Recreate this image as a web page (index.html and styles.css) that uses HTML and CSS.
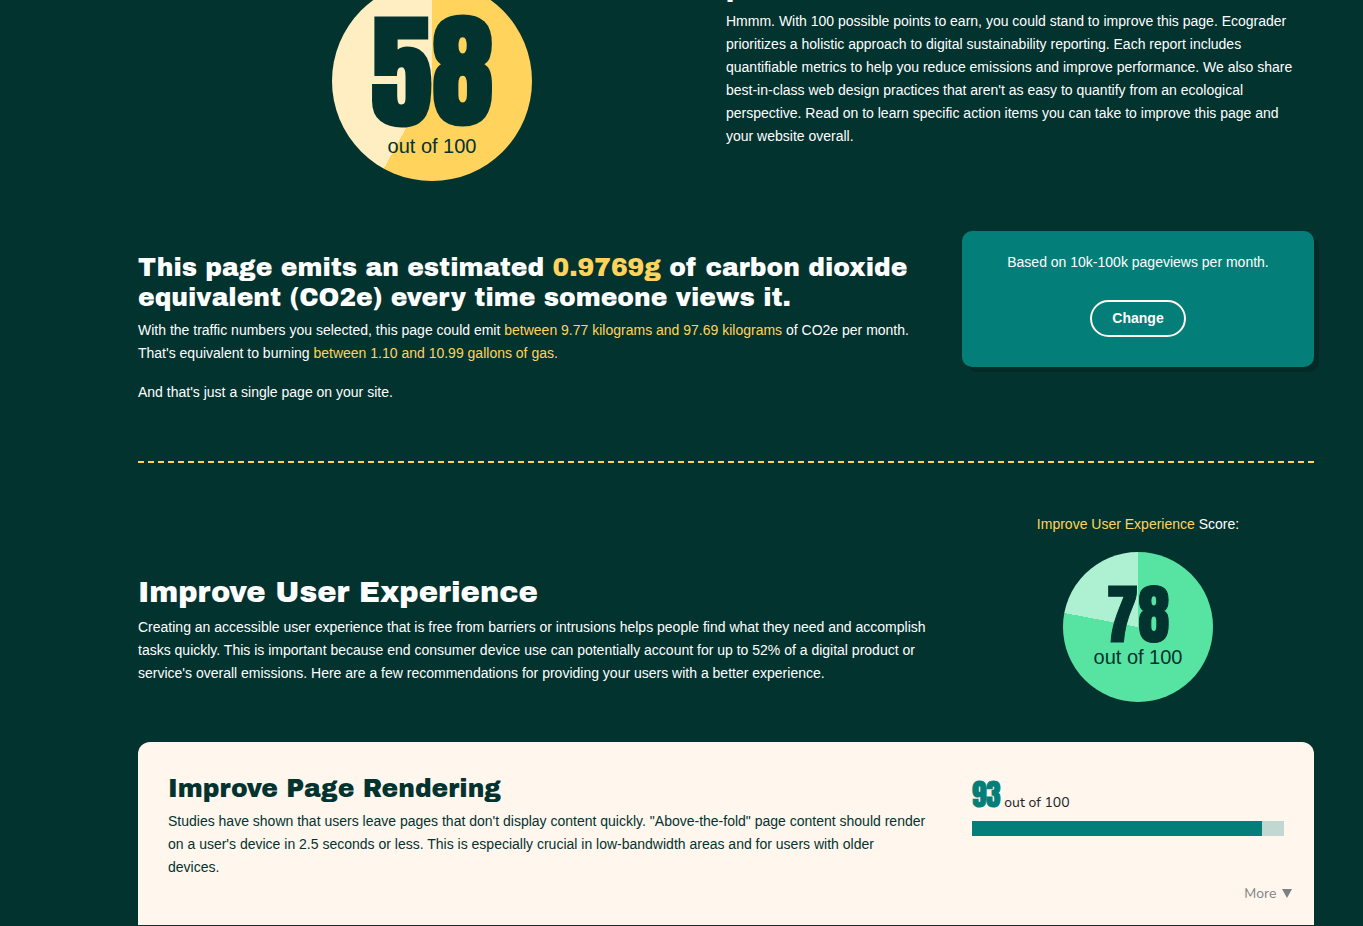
FILE: index.html
```html
<!DOCTYPE html>
<html lang="en">
<head>
<meta charset="utf-8">
<meta name="viewport" content="width=device-width, initial-scale=1">
<title>Ecograder Report</title>
<link rel="stylesheet" href="styles.css">
</head>
<body>
<main class="page">
  <section class="hero">
    <div class="dial dial-large">
      <span class="dial-number">58</span>
      <span class="dial-label">out of 100</span>
    </div>
    <div class="hero-copy">
      <h2 class="heading">p</h2>
      <p class="text">Hmmm. With 100 possible points to earn, you could stand to improve this page. Ecograder prioritizes a holistic approach to digital sustainability reporting. Each report includes quantifiable metrics to help you reduce emissions and improve performance. We also share best-in-class web design practices that aren't as easy to quantify from an ecological perspective. Read on to learn specific action items you can take to improve this page and your website overall.</p>
    </div>
  </section>

  <section class="emissions">
    <div class="emissions-copy">
      <h2 class="heading">This page emits an estimated <span class="accent">0.9769g</span> of carbon dioxide equivalent (CO2e) every time someone views it.</h2>
      <p class="text">With the traffic numbers you selected, this page could emit <span class="accent">between 9.77 kilograms and 97.69 kilograms</span> of CO2e per month. That's equivalent to burning <span class="accent">between 1.10 and 10.99 gallons of gas.</span></p>
      <p class="text">And that's just a single page on your site.</p>
    </div>
    <aside class="traffic">
      <p class="text">Based on 10k-100k pageviews per month.</p>
      <button class="change" type="button">Change</button>
    </aside>
  </section>

  <hr class="divider">

  <section class="experience">
    <div class="experience-copy">
      <h1 class="title">Improve User Experience</h1>
      <p class="text">Creating an accessible user experience that is free from barriers or intrusions helps people find what they need and accomplish tasks quickly. This is important because end consumer device use can potentially account for up to 52% of a digital product or service's overall emissions. Here are a few recommendations for providing your users with a better experience.</p>
    </div>
    <div class="experience-score">
      <p class="text"><span class="accent">Improve User Experience</span> Score:</p>
      <div class="dial dial-small">
        <span class="dial-number">78</span>
        <span class="dial-label">out of 100</span>
      </div>
    </div>
  </section>

  <article class="card">
    <div class="card-copy">
      <h2 class="heading">Improve Page Rendering</h2>
      <p class="text">Studies have shown that users leave pages that don't display content quickly. "Above-the-fold" page content should render on a user's device in 2.5 seconds or less. This is especially crucial in low-bandwidth areas and for users with older devices.</p>
    </div>
    <div class="card-score">
      <p class="score"><strong class="score-number">93</strong> out of 100</p>
      <div class="meter"><div class="meter-fill" style="width: 93%"></div></div>
    </div>
    <button class="more" type="button">More <svg class="more-icon" viewBox="0 0 10 9" aria-hidden="true"><path d="M0 0h10L5 9z"/></svg></button>
  </article>
</main>
</body>
</html>
```
FILE: styles.css
```css
* { box-sizing: border-box; }

body {
  margin: 0;
  overflow-x: hidden;
  background: #03332f;
  color: #fff;
  font-family: "Liberation Sans", Arial, sans-serif;
  font-size: 14px;
  line-height: 23px;
}

h1, h2, p { margin: 0; }

.page { padding: 0 49px 0 138px; }

.accent { color: #ffd35c; }

.heading, .title {
  font-family: "Arial Black", "Archivo Black", Inter, sans-serif;
  font-weight: 400;
}
.heading { font-size: 25px; line-height: 30px; }
.title { font-size: 29px; line-height: 36px; }
.heading + .text { margin-top: 6px; }
.title + .text { margin-top: 5px; }
.text + .text { margin-top: 16px; }

.hero {
  display: grid;
  grid-template-columns: 1fr 1fr;
  margin-top: -19px;
}
.hero-copy { padding-right: 8px; }
.hero-copy .heading { margin-top: -7px; }

.dial {
  display: flex;
  flex-direction: column;
  align-items: center;
  justify-content: center;
  margin: 0 auto;
  border-radius: 50%;
  color: #03332f;
}
.dial-large {
  width: 200px;
  height: 200px;
  background: conic-gradient(#ffd35c 58%, #ffeec2 0);
}
.dial-small {
  width: 150px;
  height: 150px;
  background: conic-gradient(#57e4a2 78%, #adf1d2 0);
}
.dial-number, .score-number {
  font-family: Impact, Anton, sans-serif;
  font-weight: 400;
}
.dial-large .dial-number {
  padding-top: 6px;
  font-size: 124px;
  line-height: 124px;
  -webkit-text-stroke: 3px;
}
.dial-small .dial-number {
  font-size: 64px;
  line-height: 60px;
  -webkit-text-stroke: 1px;
}
.dial-label { font-size: 20px; line-height: 24px; }

.emissions {
  display: grid;
  grid-template-columns: minmax(0, 1fr) 352px;
  gap: 24px;
  margin-top: 50px;
}
.emissions-copy { padding-top: 22px; }
.traffic {
  display: flex;
  flex-direction: column;
  align-items: center;
  align-self: start;
  gap: 26px;
  padding: 20px 20px 30px;
  border-radius: 10px;
  background: #047e78;
  box-shadow: 5px 5px 0 #032a27;
}
.change {
  padding: 8px 20px;
  border: 2px solid #fff6ee;
  border-radius: 20px;
  background: transparent;
  color: #fff;
  font: 700 14px/17px "Liberation Sans", Arial, sans-serif;
}

.divider {
  height: 2px;
  margin: 57px 0 50px;
  border: 0;
  background: repeating-linear-gradient(90deg, #ffd35c 0 6px, transparent 6px 10px);
}

.experience {
  display: grid;
  grid-template-columns: minmax(0, 1fr) 352px;
}
.experience-copy { align-self: end; padding-bottom: 17px; }
.experience-score { text-align: center; }
.experience-score .text { margin-bottom: 16px; }

.card {
  display: grid;
  grid-template-columns: minmax(0, 1fr) 312px;
  column-gap: 20px;
  margin-top: 40px;
  margin-bottom: 1px;
  padding: 32px 30px 20px;
  border-radius: 12px 12px 0 0;
  background: #fff6ee;
  color: #03332f;
}
.card-copy { padding-right: 26px; }
.card-score { padding-top: 4px; }
.score {
  color: #222;
  font-family: Nunito, "Noto Sans", sans-serif;
  font-size: 14px;
  line-height: 36px;
}
.score-number {
  color: #047e78;
  font-size: 29px;
  line-height: 34px;
  -webkit-text-stroke: 1px;
}
.meter { height: 15px; background: #c1d8d2; }
.meter-fill { height: 100%; background: #047e78; }
.more {
  grid-column: 2;
  justify-self: end;
  margin: 3px -8px 0 0;
  padding: 0;
  border: 0;
  background: none;
  color: #808080;
  font: 400 14px/23px Nunito, "Noto Sans", sans-serif;
}
.more-icon { width: 10px; height: 9px; margin-left: 2px; fill: #808080; }
```
